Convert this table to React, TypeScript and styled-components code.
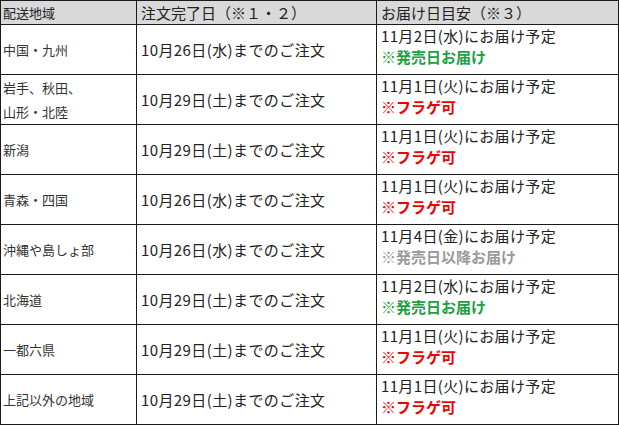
import React from "react";
import styled, { createGlobalStyle } from "styled-components";

const Global = createGlobalStyle`
  html, body { margin: 0; padding: 0; background: #ffffff; }
  body { font-family: "Noto Sans CJK JP", "Noto Sans", sans-serif; color: #222; }
`;

const Table = styled.table`
  border-collapse: collapse;
  table-layout: fixed;
  width: 618px;
  font-family: "Noto Sans CJK JP", "Noto Sans", sans-serif;
`;

const HeadCell = styled.th<{ $small?: boolean }>`
  background: #d9d9d9;
  border: 1px solid #1a1a1a;
  height: 23px;
  padding: 0 0 0 ${(p) => (p.$small ? "2px" : "4px")};
  text-align: left;
  font-weight: normal;
  font-size: ${(p) => (p.$small ? "13px" : "15px")};
  line-height: 23px;
  color: #222;
  white-space: nowrap;
  overflow: hidden;
`;

const Row = styled.tr`
  height: 50px;
`;

const RegionCell = styled.td`
  border: 1px solid #1a1a1a;
  padding: 0 0 0 2px;
  font-size: 13px;
  line-height: 24px;
  color: #333;
  vertical-align: middle;
`;

const OrderCell = styled.td`
  border: 1px solid #1a1a1a;
  padding: 0 0 0 4px;
  font-size: 15px;
  line-height: 21px;
  letter-spacing: 0.4px;
  color: #222;
  vertical-align: middle;
  white-space: nowrap;
`;

const DeliveryCell = styled.td`
  border: 1px solid #1a1a1a;
  padding: 0 0 0 4px;
  font-size: 15px;
  line-height: 21px;
  color: #222;
  vertical-align: top;
  white-space: nowrap;
`;

const Line = styled.div`
  height: 21px;
  line-height: 21px;
  letter-spacing: 0.35px;
`;

const Note = styled.div<{ $tone: "green" | "red" | "gray" }>`
  height: 21px;
  line-height: 21px;
  font-weight: bold;
  color: ${(p) =>
    p.$tone === "green" ? "#20a040" : p.$tone === "red" ? "#f00000" : "#999999"};
`;

type Tone = "green" | "red" | "gray";
const notes: Record<Tone, string> = {
  green: "※発売日お届け",
  red: "※フラゲ可",
  gray: "※発売日以降お届け",
};

const rows: { region: React.ReactNode; order: string; delivery: string; tone: Tone }[] = [
  { region: "中国・九州", order: "10月26日(水)までのご注文", delivery: "11月2日(水)にお届け予定", tone: "green" },
  {
    region: (
      <>
        岩手、秋田、
        <br />
        山形・北陸
      </>
    ),
    order: "10月29日(土)までのご注文",
    delivery: "11月1日(火)にお届け予定",
    tone: "red",
  },
  { region: "新潟", order: "10月29日(土)までのご注文", delivery: "11月1日(火)にお届け予定", tone: "red" },
  { region: "青森・四国", order: "10月26日(水)までのご注文", delivery: "11月1日(火)にお届け予定", tone: "red" },
  { region: "沖縄や島しょ部", order: "10月26日(水)までのご注文", delivery: "11月4日(金)にお届け予定", tone: "gray" },
  { region: "北海道", order: "10月29日(土)までのご注文", delivery: "11月2日(水)にお届け予定", tone: "green" },
  { region: "一都六県", order: "10月29日(土)までのご注文", delivery: "11月1日(火)にお届け予定", tone: "red" },
  { region: "上記以外の地域", order: "10月29日(土)までのご注文", delivery: "11月1日(火)にお届け予定", tone: "red" },
];

export default function App() {
  return (
    <>
      <Global />
      <Table>
        <colgroup>
          <col style={{ width: 136 }} />
          <col style={{ width: 240 }} />
          <col style={{ width: 242 }} />
        </colgroup>
        <thead>
          <tr>
            <HeadCell $small>配送地域</HeadCell>
            <HeadCell>注文完了日（※１・２）</HeadCell>
            <HeadCell>お届け日目安（※３）</HeadCell>
          </tr>
        </thead>
        <tbody>
          {rows.map((r, i) => (
            <Row key={i}>
              <RegionCell>{r.region}</RegionCell>
              <OrderCell>{r.order}</OrderCell>
              <DeliveryCell>
                <Line>{r.delivery}</Line>
                <Note $tone={r.tone}>{notes[r.tone]}</Note>
              </DeliveryCell>
            </Row>
          ))}
        </tbody>
      </Table>
    </>
  );
}
